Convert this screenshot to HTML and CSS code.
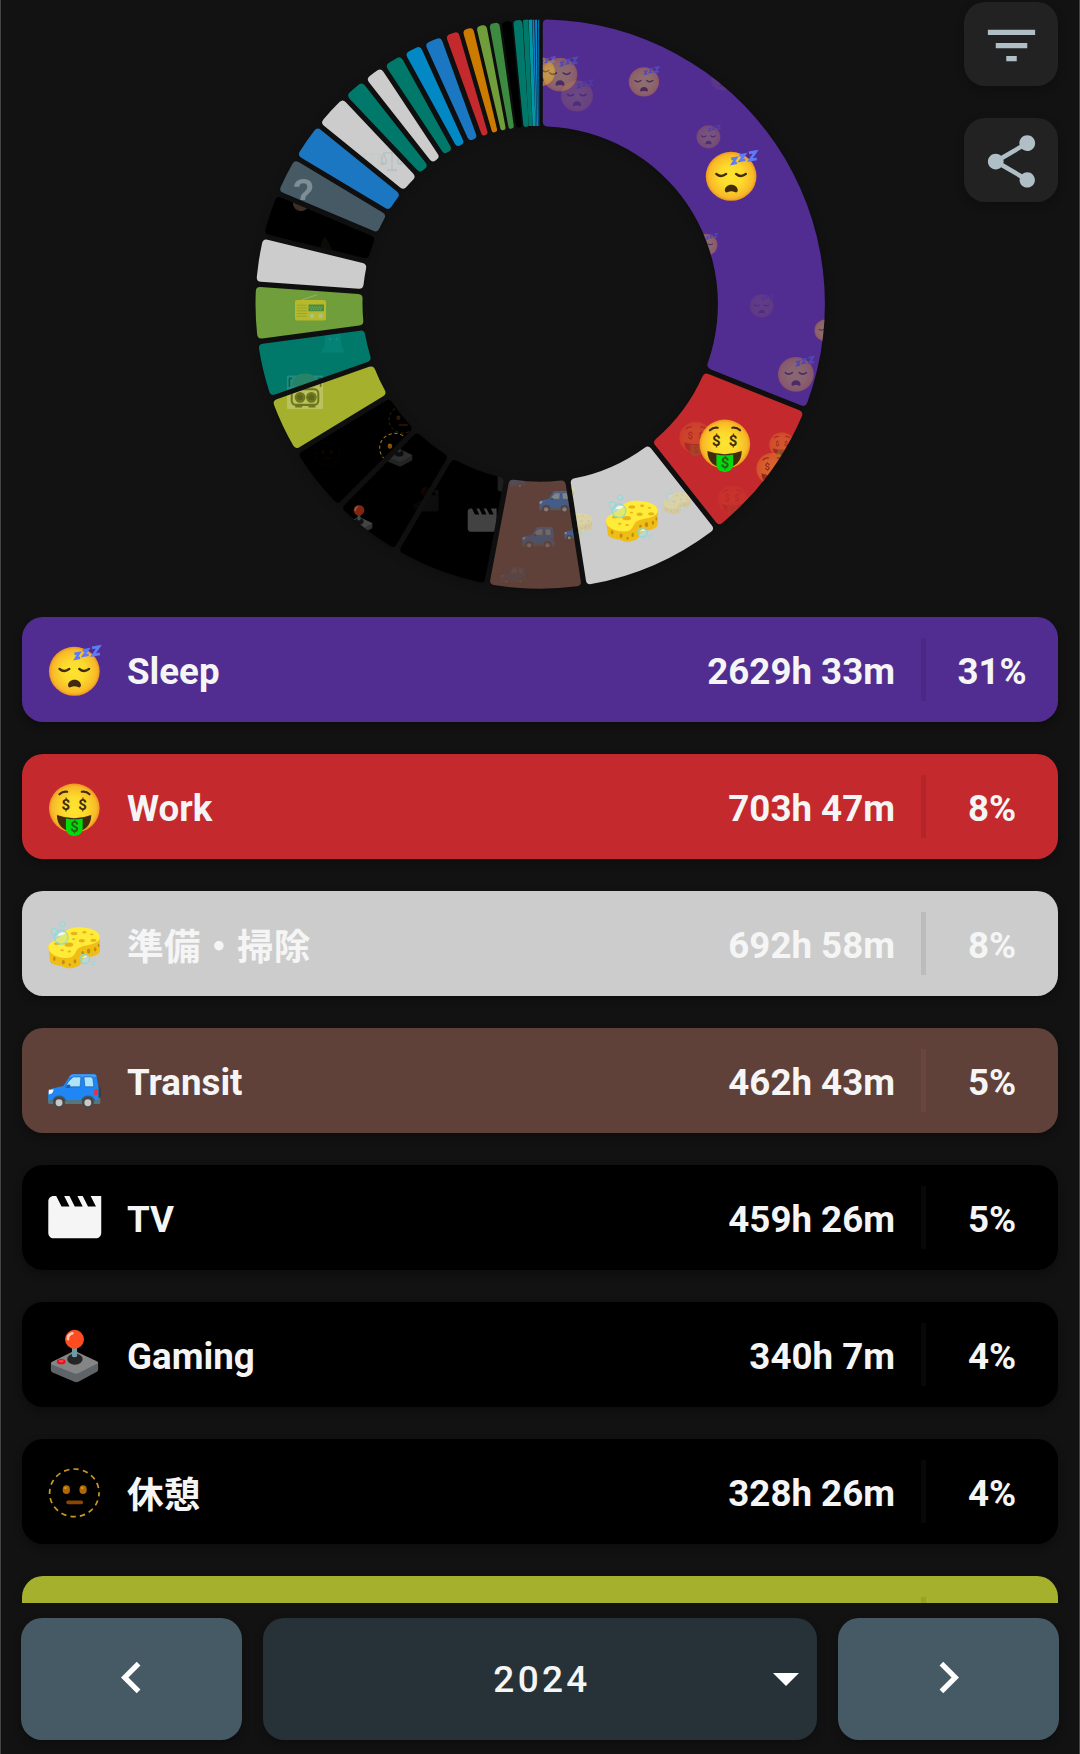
FILE: index.html
```html
<!DOCTYPE html>
<html lang="en">
<head>
<meta charset="utf-8">
<title>Yearly statistics</title>
<link rel="stylesheet" href="styles.css">
</head>
<body>
<svg class="sprite" aria-hidden="true">
  <defs>
    <radialGradient id="face-fill" cx="50%" cy="50%" r="50%">
      <stop offset="0" stop-color="#fde42f"/><stop offset=".45" stop-color="#fddb2d"/>
      <stop offset=".88" stop-color="#f7b928"/><stop offset="1" stop-color="#ee9320"/>
    </radialGradient>
  </defs>
  <symbol id="sleep" viewBox="0 0 128 128">
    <ellipse cx="63.6" cy="63.5" rx="59" ry="57" fill="url(#face-fill)"/>
    <path d="M29 58q11 10 23 0M75 58q11 10 23 0" fill="none" stroke="#422b0d" stroke-width="5.5" stroke-linecap="round"/>
    <path d="M64 83c9 0 15 6 15 13 0 5-4 6-7 4-5-2-11-2-16 0-3 2-7 1-7-4 0-7 6-13 15-13z" fill="#422b0d"/>
    <path d="M64 23l11-2-8 13 10-2M83 15l12-2-10 14 12-2M105 9l16-3-14 20 16-3" fill="none" stroke="#5c7cf9" stroke-width="6"/>
  </symbol>
  <symbol id="work" viewBox="0 0 128 128">
    <ellipse cx="63.6" cy="63" rx="59" ry="57" fill="url(#face-fill)"/>
    <path d="M29 31q8-8 18-6M81 25q10-2 18 6" fill="none" stroke="#422b0d" stroke-width="5" stroke-linecap="round"/>
    <path d="M23 79q41 15 80 0c0 25-16 39-39.500 39S23 104 23 79z" fill="#422b0d"/>
    <path d="M44 87q20 4 39 0v22c0 12-7 19-19.500 19S44 121 44 109z" fill="#00dc0a"/>
    <g class="dollar" text-anchor="middle"><text x="43.500" y="67">$</text><text x="83" y="67">$</text><text x="64" y="119" class="dollar-tongue">$</text></g>
  </symbol>
  <symbol id="sponge" viewBox="0 0 128 128">
    <path d="M3 66l4 35c6 9 20 8 30 12 12 7 28 5 40-4 6-5 3-11 8-15 10-5 32-2 38-16V46z" fill="#efbe16"/>
    <path d="M3 67C4 54 30 50 38 35 46 24 66 20 84 22c23 2 39 10 39 23 0 17-32 17-46 23-12 5-9 19-22 24C34 96 2 87 3 67z" fill="#ffeb38"/>
    <g fill="#e5b41c"><ellipse cx="63" cy="36" rx="8" ry="4"/><ellipse cx="51" cy="62" rx="10" ry="5"/><ellipse cx="81" cy="53" rx="7" ry="4"/><ellipse cx="108" cy="52" rx="7" ry="4"/><ellipse cx="23" cy="60" rx="7" ry="3"/><ellipse cx="87" cy="33" rx="5" ry="3"/><ellipse cx="52" cy="78" rx="4" ry="2.500"/><ellipse cx="35" cy="75" rx="4" ry="2.500"/><ellipse cx="62" cy="49" rx="4" ry="2"/><ellipse cx="104" cy="38" rx="4" ry="2"/></g>
    <g fill="#c58b10"><ellipse cx="17" cy="95" rx="3" ry="5"/><ellipse cx="38" cy="103" rx="3.500" ry="5"/><ellipse cx="53" cy="109" rx="2.500" ry="3"/><ellipse cx="65" cy="101" rx="3" ry="5"/><ellipse cx="97" cy="77" rx="4" ry="6"/><ellipse cx="112" cy="73" rx="3" ry="5"/><ellipse cx="120" cy="64" rx="2" ry="4"/><ellipse cx="83" cy="81" rx="3" ry="4"/></g>
    <g fill="#a6e6d4" fill-opacity=".35" stroke="#80d8e0" stroke-opacity=".8" stroke-width="3"><circle cx="33" cy="45" r="16"/><circle cx="36" cy="14" r="6" stroke-width="2"/><circle cx="18" cy="32" r="8" stroke-width="2"/><circle cx="88" cy="95" r="11"/><circle cx="107" cy="105" r="4" stroke-width="1.500"/></g>
    <path d="M24 41q8-12 20-6-8 8-20 6M81 93l8-6 6 4z" fill="#fff" opacity=".8"/>
  </symbol>
  <symbol id="transit" viewBox="0 0 128 128">
    <rect x="116" y="73" width="10" height="25" rx="4" fill="#3b3f42"/>
    <path d="M3 100h121v11q0 3-4 3H6q-4 0-4-4z" fill="#537681"/>
    <path d="M54 47q2-2 6-2h50q4 0 5 4l5 28v28H3V86q1-5 9-8l26-6z" fill="#2186f5"/>
    <path d="M56 47q2-2 5-2h49q4 0 5 4v2H51z" fill="#4798f5"/>
    <path d="M61 51h18l-2 23H42q8-15 19-23zM86 51h16q4 0 5 5l2 18H88z" fill="#aee4f7" stroke="#0d5bb5" stroke-width="1.500"/>
    <path d="M45 69h9v8h-9z" fill="#175db5"/>
    <path d="M4 81l12-1-4 9-8 3z" fill="#f5f9fa"/><rect x="110" y="80" width="8" height="13" fill="#f12c32"/>
    <path d="M12 107a17 17 0 0 1 33 0M79 107a17 17 0 0 1 33 0" fill="#355f72"/>
    <circle cx="28" cy="111" r="14" fill="#4b4544"/><circle cx="95" cy="111" r="14" fill="#4b4544"/>
    <circle cx="28" cy="111" r="8" fill="#c8c8c8"/><circle cx="95" cy="111" r="8" fill="#c8c8c8"/>
  </symbol>
  <symbol id="tv" viewBox="0 0 128 128">
    <path transform="translate(-9.300 -15.600) scale(6.160)" fill="#f5f5f5" d="M18 4l2 4h-3l-2-4h-2l2 4h-3l-2-4H8l2 4H7L5 4H4c-1.100 0-1.990.9-1.990 2L2 18c0 1.100.9 2 2 2h16c1.100 0 2-.9 2-2V4h-4z"/>
  </symbol>
  <symbol id="gaming" viewBox="0 0 128 128">
    <path d="M9 80l110-1v16q0 3-4 5l-42 23q-5 2-9 0L13 101q-4-2-4-5z" fill="#5f6468"/>
    <path d="M12 76l47-23q5-2 10 0l47 22q6 3 0 6l-43 22q-5 2-10 0L12 83q-6-4 0-7z" fill="#858585"/>
    <ellipse cx="65" cy="70" rx="18" ry="13" fill="#252525"/>
    <path d="M58 44h12v20q-6 3-12 0z" fill="#6b9ca5"/>
    <circle cx="64" cy="24" r="22" fill="#fe4b20"/><path d="M49 24q-2-10 10-14" fill="none" stroke="#ffc7b6" stroke-width="6" stroke-linecap="round"/>
    <ellipse cx="33" cy="76" rx="10" ry="6" fill="#e50d20"/><ellipse cx="33" cy="75" rx="6" ry="3" fill="#fb4740"/>
  </symbol>
  <symbol id="rest" viewBox="0 0 128 128">
    <ellipse cx="63.600" cy="62.500" rx="57.500" ry="55.500" fill="none" stroke="#c99a22" stroke-width="4" stroke-dasharray="12.500 9.700" stroke-dashoffset="4"/>
    <ellipse cx="45" cy="55" rx="8.500" ry="10" fill="#b26700"/><ellipse cx="84" cy="55" rx="8.500" ry="10" fill="#b26700"/>
    <circle cx="43" cy="51" r="3" fill="#d69240"/><circle cx="82" cy="51" r="3" fill="#d69240"/>
    <rect x="45" y="80" width="39" height="9" rx="4" fill="#8a4700"/>
  </symbol>
  <symbol id="radio" viewBox="0 0 128 128">
    <path d="M28 36L90 15" stroke="#c4dfcc" stroke-width="3"/>
    <rect x="2" y="36" width="124" height="82" rx="8" fill="#ffd11c"/>
    <path d="M9 57h40M9 68h40M9 79h40M9 90h40M9 101h40" stroke="#97a32c" stroke-width="3"/>
    <rect x="56" y="54" width="62" height="27" fill="#2d7c4a"/><path d="M60 65h54M65 73h45" stroke="#a7df8d" stroke-width="3" stroke-dasharray="5 4"/>
    <circle cx="70" cy="100" r="9" fill="#cff0d5"/><circle cx="104" cy="100" r="9" fill="#cff0d5"/>
  </symbol>
  <symbol id="recorder" viewBox="0 0 128 128">
    <rect x="1" y="10" width="126" height="117" rx="4" fill="#fff" opacity=".55"/>
    <path d="M19 42q8-42 45-38 37-4 44 38l-18 12-50 1z" fill="#90a45c"/>
    <g fill="none" stroke="#202800" stroke-width="7"><rect x="18" y="58" width="92" height="54" rx="14"/><circle cx="47" cy="86" r="15"/><circle cx="86" cy="86" r="15"/><path d="M30 118h24M76 118h24"/></g>
    <circle cx="47" cy="86" r="12"/><circle cx="86" cy="86" r="12"/><path d="M10 22v28M8 20h12M118 22v28M108 20h12" stroke="#202800" stroke-width="6"/>
  </symbol>
  <symbol id="ghost" viewBox="0 0 128 128">
    <path d="M22 88V38q0-30 42-30t42 30v50l20 36H2z" fill="#23c2b8"/><circle cx="48" cy="54" r="7" fill="#dff"/><circle cx="84" cy="54" r="7" fill="#dff"/>
  </symbol>
  <symbol id="scales" viewBox="0 0 128 128">
    <g fill="none" stroke="#78a6b3" stroke-width="7"><path d="M64 4v110M20 25h88M20 25L4 76M20 25l16 51M108 25L92 76M108 25l16 51"/></g>
    <path d="M2 76h36q-4 16-18 16T2 76zM90 76h36q-4 16-18 16T90 76zM38 112h52v12H38z" fill="#78a6b3"/>
  </symbol>
  <symbol id="person" viewBox="0 0 128 128"><circle cx="64" cy="64" r="58" fill="#b28869"/></symbol>
  <symbol id="cone" viewBox="0 0 128 128"><path d="M48 6Q62 10 112 122H16Q26 30 48 6z" fill="#a88a50"/></symbol>
</svg>

<main class="app">
  <section class="overview">
    <svg class="donut" viewBox="0 0 1078 617" id="donut" role="img" aria-label="Share of time by activity"></svg>
    <div class="actions">
      <button class="action" aria-label="Filter"><svg viewBox="0 0 24 24"><path d="M10 18h4v-2h-4v2zM3 6v2h18V6H3zm3 7h12v-2H6v2z"/></svg></button>
      <button class="action" aria-label="Share"><svg viewBox="0 0 24 24"><path d="M18 16.080c-.760 0-1.440.3-1.960.77L8.910 12.700c.05-.23.09-.46.09-.7s-.04-.47-.09-.7l7.050-4.110c.54.5 1.250.81 2.040.81 1.660 0 3-1.340 3-3s-1.340-3-3-3-3 1.340-3 3c0 .24.04.47.09.7L8.040 9.810C7.500 9.310 6.790 9 6 9c-1.660 0-3 1.340-3 3s1.340 3 3 3c.79 0 1.500-.31 2.040-.81l7.120 4.160c-.05.21-.08.43-.08.65 0 1.610 1.310 2.920 2.920 2.920s2.920-1.310 2.920-2.920-1.310-2.920-2.920-2.920z"/></svg></button>
    </div>
  </section>

  <section class="list">
    <article class="row purple"><svg class="emoji"><use href="#sleep"/></svg><span class="name">Sleep</span><span class="time">2629h 33m</span><span class="share">31%</span></article>
    <article class="row red"><svg class="emoji"><use href="#work"/></svg><span class="name">Work</span><span class="time">703h 47m</span><span class="share">8%</span></article>
    <article class="row grey"><svg class="emoji"><use href="#sponge"/></svg><span class="name" lang="ja">準備・掃除</span><span class="time">692h 58m</span><span class="share">8%</span></article>
    <article class="row brown"><svg class="emoji"><use href="#transit"/></svg><span class="name">Transit</span><span class="time">462h 43m</span><span class="share">5%</span></article>
    <article class="row black"><svg class="emoji"><use href="#tv"/></svg><span class="name">TV</span><span class="time">459h 26m</span><span class="share">5%</span></article>
    <article class="row black"><svg class="emoji"><use href="#gaming"/></svg><span class="name">Gaming</span><span class="time">340h 7m</span><span class="share">4%</span></article>
    <article class="row black"><svg class="emoji"><use href="#rest"/></svg><span class="name" lang="ja">休憩</span><span class="time">328h 26m</span><span class="share">4%</span></article>
    <article class="row lime"><span class="name"></span><span class="share"></span></article>
  </section>

  <nav class="period">
    <button class="step" aria-label="Previous year"><svg viewBox="0 0 24 24"><path d="M15.410 7.410L14 6l-6 6 6 6 1.410-1.410L10.830 12z"/></svg></button>
    <button class="year"><span>2024</span><i class="caret"></i></button>
    <button class="step" aria-label="Next year"><svg viewBox="0 0 24 24"><path d="M10 6L8.590 7.410 13.170 12l-4.580 4.590L10 18l6-6z"/></svg></button>
  </nav>
</main>
<script src="donut.js"></script>
</body>
</html>
```
FILE: styles.css
```css
* { box-sizing: border-box; }

body {
  margin: 0;
  background: #121212;
  color: #f5f5f5;
  font-family: Roboto, "Noto Sans CJK JP", sans-serif;
}

button {
  border: 0;
  padding: 0;
  color: inherit;
  font: inherit;
}

.sprite { position: absolute; width: 128px; height: 128px; pointer-events: none; }

.dollar { font: bold 35px Roboto, sans-serif; fill: #422b0d; }
.dollar-tongue { fill: #2f5f1b; }

.app {
  display: flex;
  flex-direction: column;
  height: 1754px;
  overflow: hidden;
  border: solid #444;
  border-width: 0 1px;
}

.overview { position: relative; height: 617px; flex: none; }
.donut { display: block; width: 1078px; height: 617px; }
.slices { filter: drop-shadow(0 2px 5px rgba(0, 0, 0, .25)); }
.unknown { font: 500 43px Roboto, sans-serif; fill: #d5dde0; opacity: .4; }

.actions {
  position: absolute;
  top: 2px;
  right: 21px;
  display: flex;
  flex-direction: column;
  gap: 32px;
}

.action {
  display: flex;
  align-items: center;
  justify-content: center;
  width: 94px;
  height: 84px;
  border-radius: 21px;
  background: #222;
  box-shadow: 0 3px 8px rgba(0, 0, 0, .25);
}
.action svg { width: 63px; height: 63px; margin-top: 2px; fill: #b0bec5; }

.list {
  flex: none;
  display: flex;
  flex-direction: column;
  gap: 32px;
  height: 986px;
  padding: 0 21px;
  overflow: hidden;
}

.row {
  flex: none;
  display: flex;
  align-items: center;
  height: 105px;
  padding-left: 25px;
  border-radius: 21px;
  box-shadow: 0 4px 9px rgba(0, 0, 0, .3);
  font-size: 36.7px;
  font-weight: 700;
  line-height: 44px;
}
.emoji { flex: none; width: 55px; height: 55px; margin: 4px 25px 0 0; }
.name { flex: 1; padding-top: 5px; }
.name:lang(ja) { padding-top: 9px; }
.time { padding: 5px 26px 0 0; }
.share {
  width: 137px;
  height: 63px;
  padding-top: 12px;
  border-left: 5px solid rgba(0, 0, 0, .08);
  text-align: center;
}

.purple { background: #512d91; }
.red { background: #c4292d; }
.grey { background: #ccc; }
.brown { background: #5f4139; }
.brown .share { border-color: #6a453e; }
.black { background: #000; }
.black .share { border-color: #080808; }
.lime { background: #a5b02d; }

.period {
  display: grid;
  grid-template-columns: 221px 1fr 221px;
  gap: 21px;
  height: 122px;
  margin: 15px 20px 14px;
}
.step, .year {
  display: flex;
  align-items: center;
  justify-content: center;
  border-radius: 21px;
  background: #455a64;
  box-shadow: 0 4px 9px rgba(0, 0, 0, .3);
}
.step svg { width: 63px; height: 63px; margin-bottom: 4px; fill: #fff; }
.year {
  position: relative;
  background: #263238;
  font-size: 37px;
  font-weight: 500;
  letter-spacing: 3.3px;
}
.year span { padding: 1px 0 0 4px; }
.caret {
  position: absolute;
  right: 18px;
  top: 55px;
  border: 13px solid transparent;
  border-top-color: #fff;
  border-bottom: 0;
}
```
FILE: donut.js
```js
// Ring geometry, in chart pixels.
const CX = 539.2, CY = 304, OUTER = 284.7, INNER = 177.7;

// id, start, end (degrees, clockwise from top), colour, optional half gap
const slices = [
  ['sleep', 0, 111.77, '#512d91'], ['work', 111.77, 141.68, '#c4292d'],
  ['clean', 141.68, 171.13, '#ccc'], ['transit', 171.13, 190.8, '#5f4139'],
  ['tv', 190.8, 210.33, '#000'], ['gaming', 210.33, 224.78, '#000'],
  ['rest', 224.78, 238.74, '#000'], ['lime', 238.74, 250.64, '#a5b02d'],
  ['teal', 250.64, 262.4, '#00796b'], ['radio', 262.4, 274, '#6f9e3b'],
  ['s10', 274, 283.8, '#ccc'], ['s11', 283.8, 292.85, '#000'],
  ['s12', 292.85, 300.96, '#455a64'], ['s13', 300.96, 308.96, '#1b77c2'],
  ['s14', 308.96, 316.6, '#ccc'], ['s15', 316.6, 321.8, '#00796b'],
  ['s16', 321.8, 326.5, '#ccc'], ['s17', 326.5, 331.15, '#00796b'],
  ['s18', 331.15, 335.6, '#0288c4'], ['s19', 335.6, 340.1, '#1b77c2'],
  ['s20', 340.1, 343.8, '#c4292d'], ['s21', 343.8, 346.7, '#cc7a00', 1.8],
  ['s22', 346.7, 349.4, '#6f9e3b', 1.6], ['s23', 349.4, 352, '#3d8b40', 1.4],
  ['s24', 352, 354.45, '#000', 1], ['s25', 354.45, 356.5, '#00796b', .5]
];

// Slices too thin for a gap: outer left/right x, inner left/right x, colour
const slivers = [
  [522, 527.4, 527.7, 531.4, '#00796b'], [527.7, 531, 531.6, 534.5, '#0097a7'],
  [531.4, 533.3, 534.6, 535.8, '#1b77c2'], [534, 536, 536, 537, '#0288c4'],
  [537, 537.8, 537.5, 538, '#0288d1'], [538.6, 539, 538.6, 539, '#005b55']
];

// slice id -> [symbol, centre x, centre y, size, opacity]
const marks = {
  sleep: [['sleep', 539, 72, 33, .5], ['sleep', 559, 74.7, 38, .35], ['sleep', 576, 96, 35, .15],
    ['sleep', 643, 82, 33, .36], ['sleep', 707.5, 137, 26, .22], ['sleep', 705, 245, 25, .34],
    ['sleep', 760.7, 306, 26, .09], ['sleep', 825, 330.5, 25, .36], ['sleep', 795, 374.5, 39, .32],
    ['sleep', 721, 80, 24, .06], ['sleep', 730.3, 176.5, 55, 1]],
  work: [['work', 695, 438, 36, .16], ['work', 781, 445, 28, .24], ['work', 772, 469, 36, .32],
    ['work', 731.5, 500, 32, .06], ['work', 724, 444.5, 55, 1]],
  clean: [['sponge', 676, 502, 29, .25], ['sponge', 576, 524, 33, .25], ['sponge', 561, 493, 26, .35],
    ['sponge', 631.3, 519, 55, 1]],
  transit: [['transit', 555, 496.5, 35, .42], ['transit', 538, 532.5, 35, .24],
    ['transit', 513, 571.5, 27, .07], ['transit', 575, 529, 24, .45], ['transit', 513, 477, 24, .16]],
  tv: [['tv', 481, 521.5, 30, .27], ['tv', 424, 502, 28, .05], ['tv', 510, 482, 28, .12]],
  gaming: [['gaming', 398, 452, 31, .35], ['gaming', 358, 520, 31, .5], ['gaming', 425, 501, 30, .05]],
  rest: [['rest', 326.3, 454, 27, .06], ['rest', 394, 448.5, 34, .75], ['rest', 402, 420, 31, .25]],
  lime: [['recorder', 304, 391, 37, .42]],
  teal: [['recorder', 304, 391, 37, .26], ['ghost', 332, 341, 25, .12]],
  radio: [['radio', 309.500, 307, 32, .5]],
  s11: [['person', 300, 203, 18, .35], ['cone', 326.5, 248, 24, .08]],
  s14: [['scales', 391, 160, 24, .26], ['scales', 371, 161, 24, .06]]
};

const point = (radius, angle) =>
  `${(CX + radius * Math.sin(angle)).toFixed(2)} ${(CY - radius * Math.cos(angle)).toFixed(2)}`;

// Ring slice with parallel gaps on both sides and rounded corners.
function slicePath(start, end, gap = 2.6) {
  const a = start * Math.PI / 180, b = end * Math.PI / 180;
  const left = r => a + Math.asin(gap / r), right = r => b - Math.asin(gap / r);
  const width = r => (right(r) - left(r)) * r;
  const ro = Math.min(4.5, width(OUTER) * .42), ri = Math.min(4.5, width(INNER) * .42);
  const large = b - a > Math.PI ? 1 : 0;
  return `M${point(INNER + ri, left(INNER + ri))}L${point(OUTER - ro, left(OUTER - ro))}` +
    `Q${point(OUTER, left(OUTER))} ${point(OUTER, left(OUTER) + ro / OUTER)}` +
    `A${OUTER} ${OUTER} 0 ${large} 1 ${point(OUTER, right(OUTER) - ro / OUTER)}` +
    `Q${point(OUTER, right(OUTER))} ${point(OUTER - ro, right(OUTER - ro))}` +
    `L${point(INNER + ri, right(INNER + ri))}` +
    `Q${point(INNER, right(INNER))} ${point(INNER, right(INNER) - ri / INNER)}` +
    `A${INNER} ${INNER} 0 ${large} 0 ${point(INNER, left(INNER) + ri / INNER)}` +
    `Q${point(INNER, left(INNER))} ${point(INNER + ri, left(INNER + ri))}Z`;
}

let clips = '', shapes = '', emoji = '';
for (const [id, start, end, colour, gap] of slices) {
  const d = slicePath(start, end, gap);
  shapes += `<path d="${d}" fill="${colour}"/>`;
  let content = (marks[id] || []).map(([symbol, x, y, size, opacity]) =>
    `<use href="#${symbol}" x="${x - size / 2}" y="${y - size / 2}" width="${size}" height="${size}" opacity="${opacity}"/>`).join('');
  if (id === 's12') content = '<text class="unknown" x="302.5" y="209" text-anchor="middle">?</text>';
  if (content) {
    clips += `<clipPath id="clip-${id}"><path d="${d}"/></clipPath>`;
    emoji += `<g clip-path="url(#clip-${id})">${content}</g>`;
  }
}
for (const [ol, or, il, ir, colour] of slivers) {
  shapes += `<path d="M${ol} 20L${or} 19.500L${ir} 126L${il} 126Z" fill="${colour}"/>`;
}
document.getElementById('donut').innerHTML =
  `<defs>${clips}</defs><g class="slices">${shapes}</g>${emoji}`;
```
